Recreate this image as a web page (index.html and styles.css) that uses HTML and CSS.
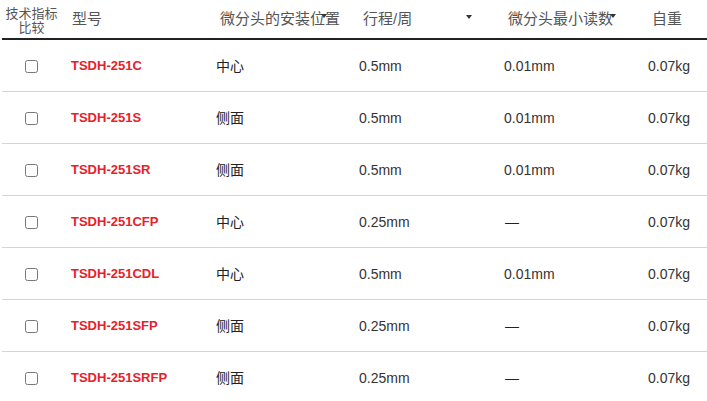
FILE: index.html
```html
<!DOCTYPE html>
<html lang="zh-CN">
<head>
<meta charset="utf-8">
<link rel="stylesheet" href="styles.css">
</head>
<body>
<table class="spec">
  <colgroup>
    <col class="c1"><col class="c2"><col class="c3"><col class="c4"><col class="c5"><col class="c6">
  </colgroup>
  <thead>
    <tr>
      <th class="cmp"><div class="cmp-box"><span>技术指标</span><span>比较</span></div></th>
      <th>型号</th>
      <th class="sort">微分头的安装位置<span class="arrow"></span></th>
      <th class="sort">行程/周<span class="arrow low"></span></th>
      <th class="sort">微分头最小读数<span class="arrow"></span></th>
      <th>自重</th>
    </tr>
  </thead>
  <tbody>
    <tr><td class="chk"><input type="checkbox"></td><td class="model">TSDH-251C</td><td class="cn">中心</td><td>0.5mm</td><td>0.01mm</td><td>0.07kg</td></tr>
    <tr><td class="chk"><input type="checkbox"></td><td class="model">TSDH-251S</td><td class="cn">侧面</td><td>0.5mm</td><td>0.01mm</td><td>0.07kg</td></tr>
    <tr><td class="chk"><input type="checkbox"></td><td class="model">TSDH-251SR</td><td class="cn">侧面</td><td>0.5mm</td><td>0.01mm</td><td>0.07kg</td></tr>
    <tr><td class="chk"><input type="checkbox"></td><td class="model">TSDH-251CFP</td><td class="cn">中心</td><td>0.25mm</td><td class="dash">—</td><td>0.07kg</td></tr>
    <tr><td class="chk"><input type="checkbox"></td><td class="model">TSDH-251CDL</td><td class="cn">中心</td><td>0.5mm</td><td>0.01mm</td><td>0.07kg</td></tr>
    <tr><td class="chk"><input type="checkbox"></td><td class="model">TSDH-251SFP</td><td class="cn">侧面</td><td>0.25mm</td><td class="dash">—</td><td>0.07kg</td></tr>
    <tr><td class="chk"><input type="checkbox"></td><td class="model">TSDH-251SRFP</td><td class="cn">侧面</td><td>0.25mm</td><td class="dash">—</td><td>0.07kg</td></tr>
  </tbody>
</table>
</body>
</html>
```
FILE: styles.css
```css
html, body {
  margin: 0;
  padding: 0;
  background: #fff;
  overflow: hidden;
}
body {
  padding-left: 2px;
  font-family: "Liberation Sans", "Noto Sans CJK SC", sans-serif;
  color: #333;
}
.spec {
  border-collapse: collapse;
  table-layout: fixed;
  width: 720px;
}
.c1 { width: 59px; }
.c2 { width: 145px; }
.c3 { width: 143px; }
.c4 { width: 145px; }
.c5 { width: 144px; }
.c6 { width: 84px; }

.spec th {
  height: 38px;
  padding: 0 0 0 14px;
  text-align: left;
  font-weight: normal;
  font-size: 15px;
  line-height: 18px;
  color: #555;
  border-bottom: 2px solid #222;
  vertical-align: middle;
  position: relative;
  white-space: nowrap;
}
.spec th:nth-child(2) { padding-left: 11px; }
.spec th.cmp {
  padding: 0;
}
.cmp-box {
  display: flex;
  flex-direction: column;
  align-items: center;
  gap: 1px;
  padding-top: 2px;
  font-size: 13px;
  line-height: 13px;
}
.arrow {
  position: absolute;
  right: 22px;
  top: 14px;
  width: 0;
  height: 0;
  border-left: 3.5px solid transparent;
  border-right: 3.5px solid transparent;
  border-top: 4px solid #333;
}
.arrow.low { top: 15px; }

.spec td {
  height: 51px;
  padding: 0 0 0 10px;
  font-size: 14px;
  line-height: 16px;
  color: #333;
  border-bottom: 1px solid #d4d4d4;
  vertical-align: middle;
  white-space: nowrap;
}
.spec td.chk {
  padding: 0;
  text-align: center;
}
.chk input {
  margin: 0;
  width: 13px;
  height: 13px;
  vertical-align: middle;
}
.spec td.model {
  color: #e8202a;
  font-weight: bold;
  font-size: 13px;
}
.spec td.cn {
  color: #222;
}
.spec td.dash {
  padding-left: 11px;
  color: #222;
}
```
